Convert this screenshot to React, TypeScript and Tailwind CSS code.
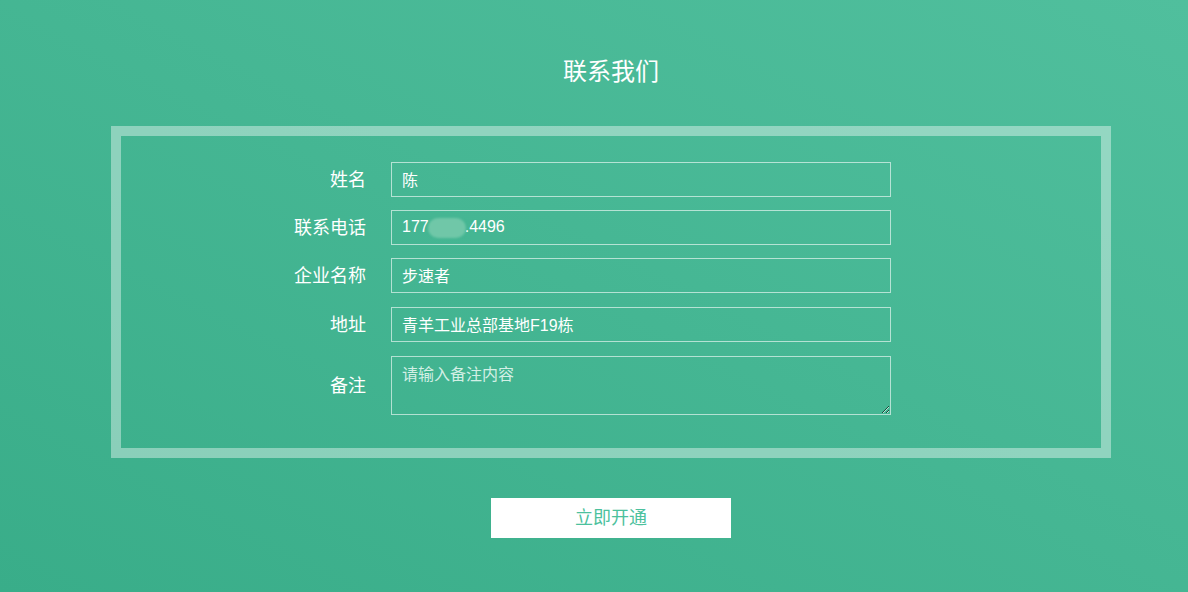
import { useState } from 'react'

const font = { fontFamily: '"Liberation Sans", "Noto Sans CJK SC", sans-serif' }

interface FieldRowProps {
  label: string
  className?: string
  children: React.ReactNode
}

function FieldRow({ label, className = '', children }: FieldRowProps) {
  return (
    <div className={`flex items-center ${className}`}>
      <label className="w-[245px] text-right text-[18px] leading-none text-white">{label}</label>
      <div className="ml-[25px] w-[500px]">{children}</div>
    </div>
  )
}

export default function App() {
  const [name, setName] = useState('陈')
  const [company, setCompany] = useState('步速者')
  const [address, setAddress] = useState('青羊工业总部基地F19栋')
  const [note, setNote] = useState('')

  const inputCls =
    'block h-[35px] w-full border border-white/60 bg-transparent px-[10px] pb-[2px] text-[16px] text-white outline-none'

  return (
    <div
      className="h-[592px] w-full overflow-hidden bg-linear-to-tr from-[#39ad89] to-[#50bf9d]"
      style={font}
    >
      <div className="ml-[111px] w-[1000px]">
        <h2 className="pt-[56px] text-center text-[24px] leading-[32px] text-white">联系我们</h2>

        <div className="mt-[38px] border-[10px] border-white/40">
          <div className="flex flex-col pt-[26px] pb-[33px]">
            <FieldRow label="姓名">
              <input className={inputCls} value={name} onChange={(e) => setName(e.target.value)} />
            </FieldRow>
            <FieldRow label="联系电话" className="mt-[13px]">
              <div className="flex h-[35px] w-full items-center border border-white/60 px-[10px] pb-[2px] text-[16px] text-white">
                177
                <span className="mx-[-1px] mt-[2px] inline-block h-[20px] w-[38px] rounded-full bg-[#70c7a8] blur-[1px]" />
                .4496
              </div>
            </FieldRow>
            <FieldRow label="企业名称" className="mt-[13px]">
              <input className={inputCls} value={company} onChange={(e) => setCompany(e.target.value)} />
            </FieldRow>
            <FieldRow label="地址" className="mt-[14px]">
              <input className={inputCls} value={address} onChange={(e) => setAddress(e.target.value)} />
            </FieldRow>
            <FieldRow label="备注" className="mt-[14px]">
              <textarea
                className="block h-[59px] w-full border border-white/60 bg-transparent px-[10px] pt-[8px] text-[16px] leading-[20px] text-white outline-none placeholder:text-[#d3efe5]"
                placeholder="请输入备注内容"
                value={note}
                onChange={(e) => setNote(e.target.value)}
              />
            </FieldRow>
          </div>
        </div>

        <div className="mt-[40px] flex justify-center">
          <button className="h-[40px] w-[240px] bg-white text-[18px] text-[#4cc19d]">立即开通</button>
        </div>
      </div>
    </div>
  )
}
